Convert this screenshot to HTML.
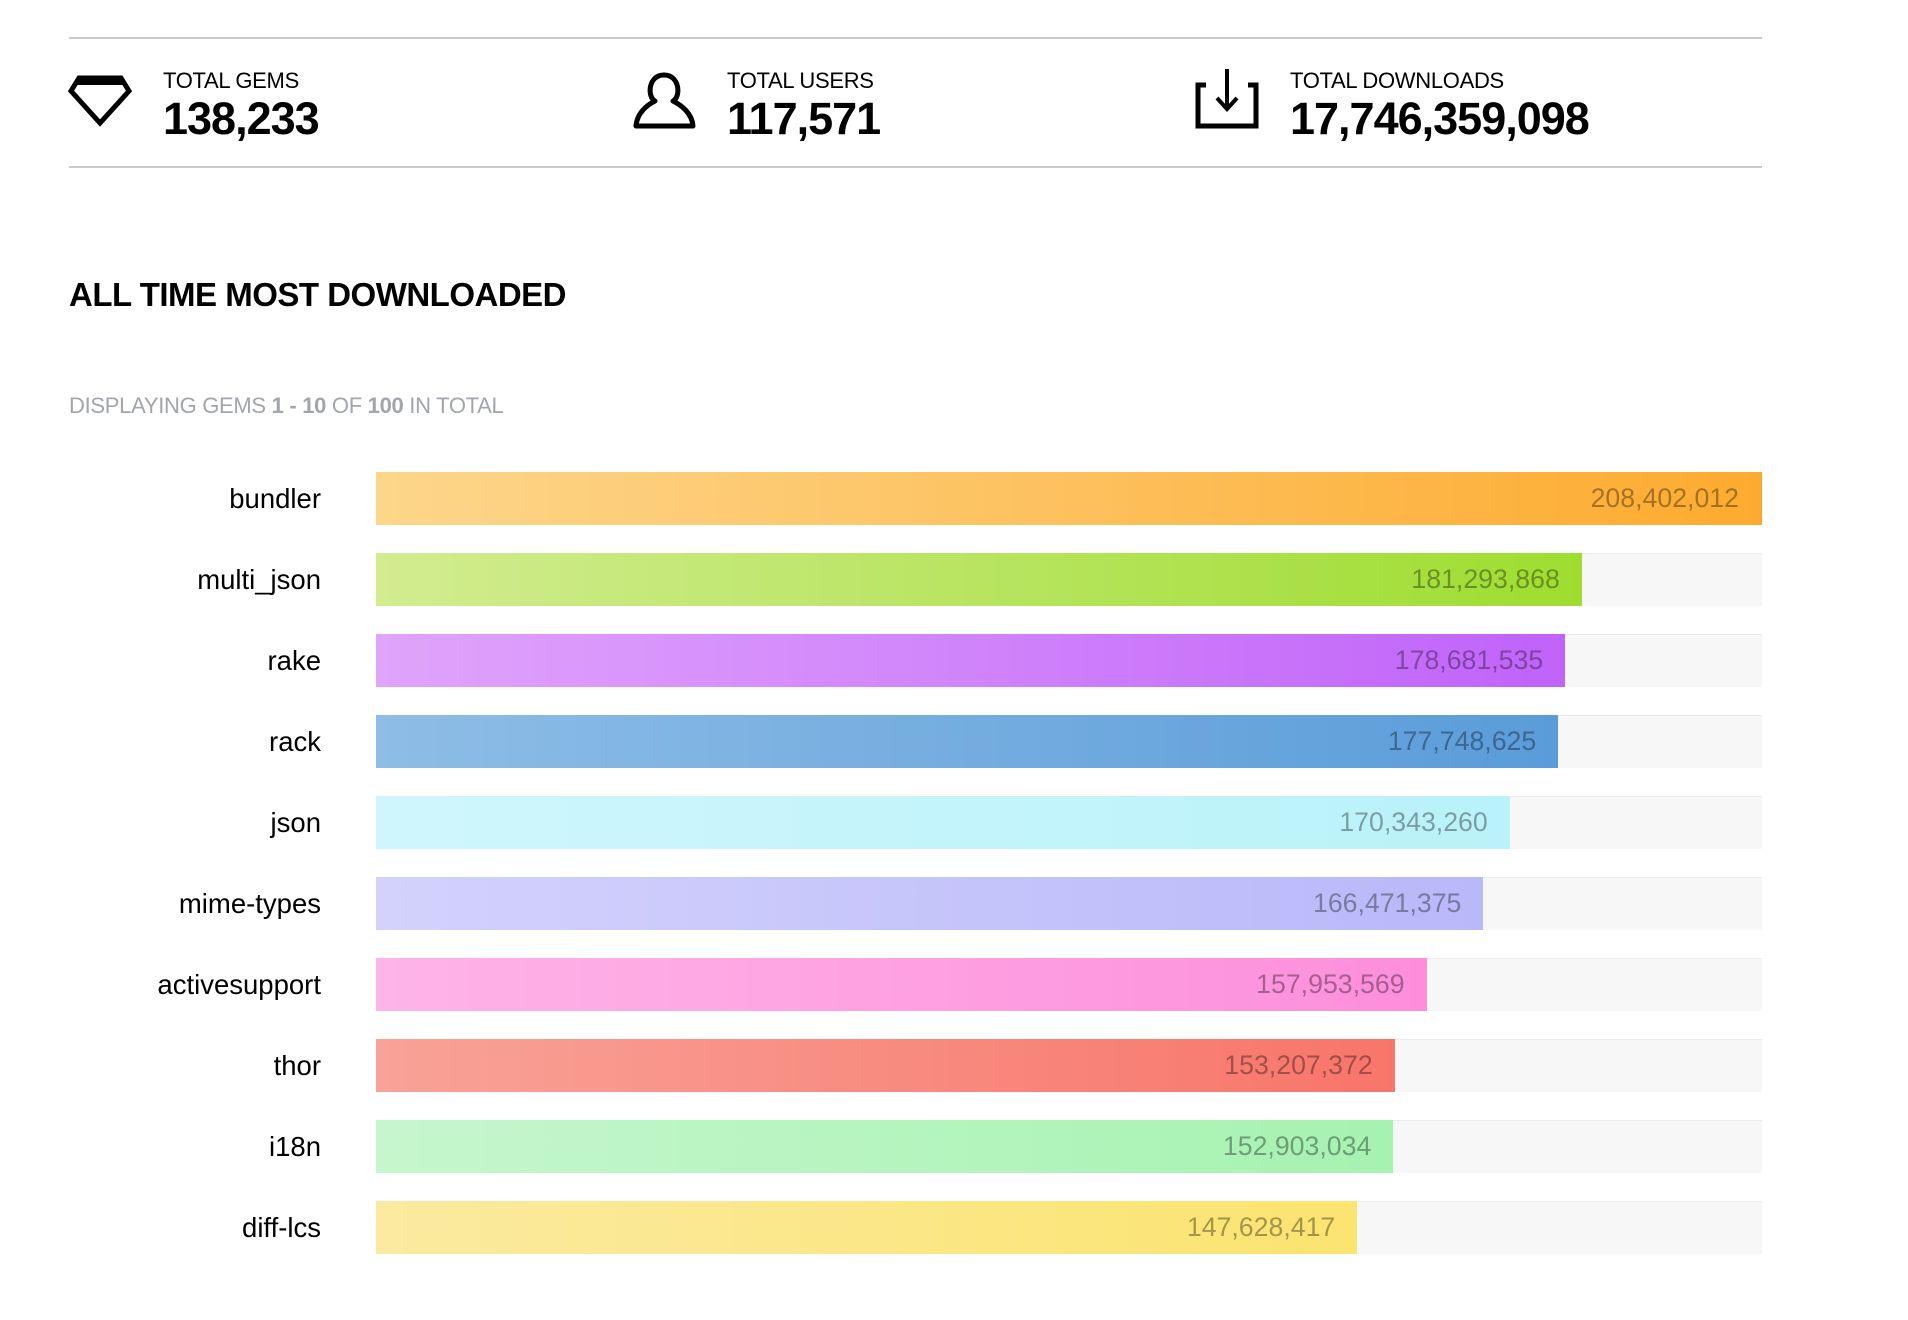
<!DOCTYPE html>
<html><head><meta charset="utf-8"><style>
*{margin:0;padding:0;box-sizing:border-box}
body{width:1908px;height:1320px;background:#fff;font-family:"Liberation Sans",Arial,sans-serif;color:#000;position:relative;overflow:hidden}
.line{position:absolute;left:69px;width:1693px;height:2px;background:#c8c9cc}
.stat{position:absolute;top:69px}
.stat .lbl{font-size:22px;line-height:24px;letter-spacing:-0.3px}
.stat .num{font-size:45px;font-weight:bold;line-height:51px;letter-spacing:-1px}
svg.ic{position:absolute}
h2{position:absolute;left:69px;top:276px;font-size:33px;font-weight:bold;letter-spacing:-0.5px}
.disp{position:absolute;left:69px;top:393px;font-size:22px;color:#a2a5ab;letter-spacing:-0.3px}
.disp b{font-weight:bold}
.row{position:absolute;left:0;width:1908px;height:53px}
.row .name{position:absolute;right:1587px;top:0;line-height:53px;font-size:27.5px;text-align:right;white-space:nowrap}
.row .track{position:absolute;left:376px;width:1386px;top:0;height:53px;background:#f7f7f7;border-top:1px solid #ececec}
.row .bar{position:absolute;left:0;top:-1px;height:53px;text-align:right;padding-right:22px;line-height:53px;font-size:26.7px;color:rgba(0,0,0,0.35)}
</style></head><body>
<div class="line" style="top:37px"></div>
<div class="line" style="top:166px"></div>

<svg class="ic" style="left:67px;top:73px" width="66" height="56" viewBox="0 0 66 56"><path d="M12 5 H54 L62 18 L33 50 L4 18 Z" fill="none" stroke="#000" stroke-width="5" stroke-linejoin="miter"/><path d="M12 5 H54 L58 12 H8 Z" fill="#000"/></svg>
<div class="stat" style="left:163px"><div class="lbl">TOTAL GEMS</div><div class="num">138,233</div></div>

<svg class="ic" style="left:631px;top:71px" width="68" height="60" viewBox="0 0 68 60"><path d="M24 30 C16 26 17 4 33 4 C49 4 50 26 42 30 C50 34 61 42 62 55 H5 C6 42 16 34 24 30 Z" fill="none" stroke="#000" stroke-width="5" stroke-linejoin="round"/></svg>
<div class="stat" style="left:727px"><div class="lbl">TOTAL USERS</div><div class="num">117,571</div></div>

<svg class="ic" style="left:1194px;top:67px" width="68" height="64" viewBox="0 0 68 64"><path d="M12 18 H4 V59 H62 V18 H54" fill="none" stroke="#000" stroke-width="5"/><path d="M33 2 V40" stroke="#000" stroke-width="4"/><path d="M23 31 L33 42 L43 31" fill="none" stroke="#000" stroke-width="4"/></svg>
<div class="stat" style="left:1290px"><div class="lbl">TOTAL DOWNLOADS</div><div class="num">17,746,359,098</div></div>

<h2>ALL TIME MOST DOWNLOADED</h2>
<div class="disp">DISPLAYING GEMS <b>1 - 10</b> OF <b>100</b> IN TOTAL</div>

<div class="row" style="top:472px"><div class="name">bundler</div><div class="track" style="border:none"><div class="bar" style="top:0;width:100%;background:linear-gradient(90deg,#fdd68b,#fdab2f);border-right:1px solid #f5a020">208,402,012</div></div></div>
<div class="row" style="top:553px"><div class="name">multi_json</div><div class="track"><div class="bar" style="width:87.0%;background:linear-gradient(90deg,#d2ec90,#9edd30)">181,293,868</div></div></div>
<div class="row" style="top:634px"><div class="name">rake</div><div class="track"><div class="bar" style="width:85.8%;background:linear-gradient(90deg,#e0a4fb,#c063fa)">178,681,535</div></div></div>
<div class="row" style="top:715px"><div class="name">rack</div><div class="track"><div class="bar" style="width:85.3%;background:linear-gradient(90deg,#8ebde6,#5a9cd9)">177,748,625</div></div></div>
<div class="row" style="top:796px"><div class="name">json</div><div class="track"><div class="bar" style="width:81.8%;background:linear-gradient(90deg,#cff6fc,#b9f2fa)">170,343,260</div></div></div>
<div class="row" style="top:877px"><div class="name">mime-types</div><div class="track"><div class="bar" style="width:79.9%;background:linear-gradient(90deg,#d3d2fc,#b9b8f9)">166,471,375</div></div></div>
<div class="row" style="top:958px"><div class="name">activesupport</div><div class="track"><div class="bar" style="width:75.8%;background:linear-gradient(90deg,#feb4e7,#fd8edc)">157,953,569</div></div></div>
<div class="row" style="top:1039px"><div class="name">thor</div><div class="track"><div class="bar" style="width:73.5%;background:linear-gradient(90deg,#f9a297,#f8756a)">153,207,372</div></div></div>
<div class="row" style="top:1120px"><div class="name">i18n</div><div class="track"><div class="bar" style="width:73.4%;background:linear-gradient(90deg,#c6f6cd,#a6f2b1)">152,903,034</div></div></div>
<div class="row" style="top:1201px"><div class="name">diff-lcs</div><div class="track"><div class="bar" style="width:70.8%;background:linear-gradient(90deg,#fbeaa0,#fbe470)">147,628,417</div></div></div>
</body></html>
